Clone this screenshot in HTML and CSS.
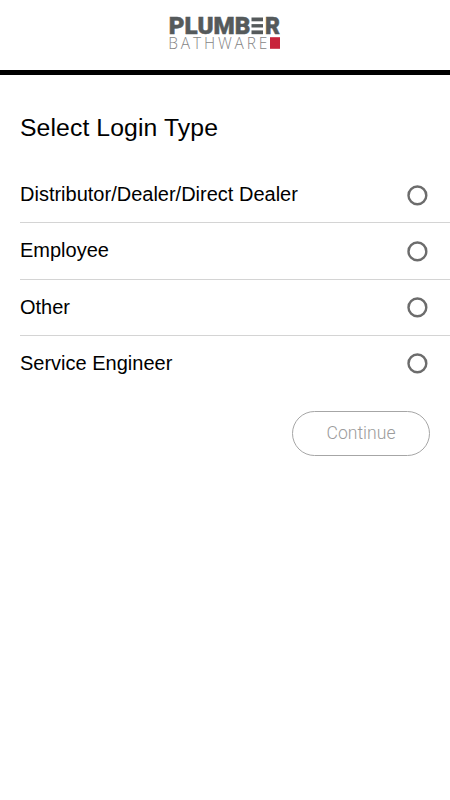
FILE: index.html
```html
<!DOCTYPE html>
<html lang="en">
<head>
<meta charset="utf-8">
<title>Select Login Type</title>
<link rel="stylesheet" href="styles.css">
</head>
<body>
<header class="header">
  <svg class="logo" width="114" height="44" viewBox="0 -6 114 44" role="img" aria-label="Plumber Bathware">
    <text class="logo-main" x="0.8" y="18" textLength="81.5" lengthAdjust="spacingAndGlyphs">PLUMB</text>
    <g class="logo-e"><rect x="83.5" y="1.5" width="11.5" height="3.8"/><rect x="83.5" y="8.1" width="11.5" height="3.4"/><rect x="83.5" y="14.4" width="11.5" height="3.8"/></g>
    <text class="logo-main" x="97" y="18" textLength="15" lengthAdjust="spacingAndGlyphs">R</text>
    <text class="logo-sub" x="0.3" y="32.8" textLength="99" lengthAdjust="spacing">BATHWARE</text>
    <rect class="logo-square" x="102" y="21.2" width="10" height="11.6"/>
  </svg>
</header>
<main class="login">
  <h1 class="title">Select Login Type</h1>
  <div class="options">
    <div class="option"><span>Distributor/Dealer/Direct Dealer</span><svg class="radio" viewBox="0 0 22 22"><circle cx="11.4" cy="11.4" r="8.9"/></svg></div>
    <div class="option"><span>Employee</span><svg class="radio" viewBox="0 0 22 22"><circle cx="11.4" cy="11.4" r="8.9"/></svg></div>
    <div class="option"><span>Other</span><svg class="radio" viewBox="0 0 22 22"><circle cx="11.4" cy="11.4" r="8.9"/></svg></div>
    <div class="option"><span>Service Engineer</span><svg class="radio" viewBox="0 0 22 22"><circle cx="11.4" cy="11.4" r="8.9"/></svg></div>
  </div>
  <button class="continue" disabled>Continue</button>
</main>
</body>
</html>
```

FILE: styles.css
```css
* { box-sizing: border-box; }
body { margin: 0; background: #fff; color: #000; font-family: "Liberation Sans", Arial, sans-serif; }
.header { height: 75px; border-bottom: 5px solid #000; display: flex; justify-content: center; padding-top: 10px; }
.logo { display: block; overflow: visible; }
.logo-main { font: 900 23px Roboto, sans-serif; fill: #555a5b; stroke: #555a5b; stroke-width: 0.5px; }
.logo-e { fill: #555a5b; }
.logo-sub { font: 300 15.5px "Open Sans", sans-serif; fill: #858585; }
.logo-square { fill: #c8233b; }
.login { display: flex; flex-direction: column; padding: 36px 0 0 20px; }
.title { margin: 0 0 22px; font-size: 24.75px; font-weight: 400; line-height: 34px; letter-spacing: 0.1px; }
.option { display: flex; align-items: center; justify-content: space-between; height: 56.25px; padding-right: 22px; border-bottom: 1px solid #d4d4d4; font-size: 20px; }
.option:last-child { border-bottom-color: transparent; }
.radio { width: 22px; height: 22px; fill: none; stroke: #6c6c6c; stroke-width: 2.4px; }
.continue { align-self: flex-end; width: 138px; height: 45px; margin: 19px 20px 0 0; padding: 0 0 2px; border: 1px solid #a6a6a6; border-radius: 23px; background: #fff; color: #9c9c9c; font: 300 17.6px Roboto, sans-serif; }
```
